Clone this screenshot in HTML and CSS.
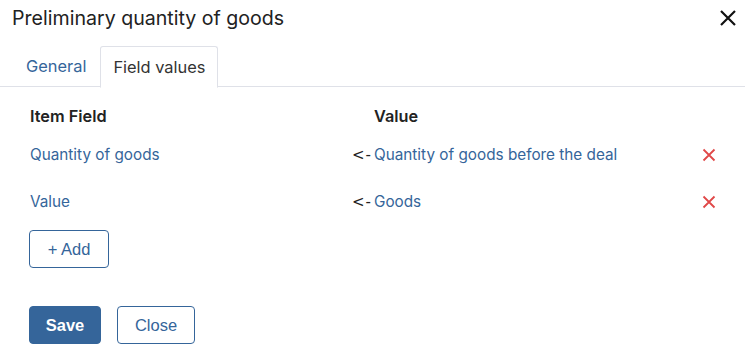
FILE: index.html
```html
<!DOCTYPE html>
<html>
<head>
    <meta charset="UTF-8">
    <title>Preliminary quantity of goods</title>
    <link rel="stylesheet" href="styles.css">
</head>
<body>
<div class="dialog">
    <div class="head">
        <div class="title">Preliminary quantity of goods</div>
        <div class="close">
            <svg width="18" height="18" viewBox="0 0 18 18"><path d="M2 2L16 16M16 2L2 16" stroke="#111" stroke-width="2.2" fill="none"/></svg>
        </div>
    </div>
    <ul class="tabs">
        <li>General</li>
        <li class="active">Field values</li>
    </ul>
    <div class="content">
        <div class="grid">
            <div class="th">Item Field</div>
            <div></div>
            <div class="th">Value</div>
            <div></div>

            <div class="link">Quantity of goods</div>
            <div class="arrow">&lt;-</div>
            <div class="link">Quantity of goods before the deal</div>
            <div class="del"><svg width="14" height="14" viewBox="0 0 14 14"><path d="M1.5 1.5L12.5 12.5M12.5 1.5L1.5 12.5" stroke="#e04848" stroke-width="1.8" fill="none"/></svg></div>

            <div class="link">Value</div>
            <div class="arrow">&lt;-</div>
            <div class="link">Goods</div>
            <div class="del"><svg width="14" height="14" viewBox="0 0 14 14"><path d="M1.5 1.5L12.5 12.5M12.5 1.5L1.5 12.5" stroke="#e04848" stroke-width="1.8" fill="none"/></svg></div>
        </div>
        <button class="btn add">+ Add</button>
        <div class="footer">
            <button class="btn primary">Save</button>
            <button class="btn">Close</button>
        </div>
    </div>
</div>
</body>
</html>
```

FILE: styles.css
```css
body,ul,li{
    margin: 0;
    padding: 0;
    list-style: none;
}
body{
    background: #fff;
    font-family: Inter, "Noto Sans", sans-serif;
    font-feature-settings: "calt" 0, "liga" 0;
    color: #222;
}
.dialog{
    width: 745px;height: 350px;
}
.head{
    display: flex;
    justify-content: space-between;
    align-items: center;
    height: 36px;
    padding: 0 8px 0 12px;
}
.title{
    font-size: 19.6px;
    color: #222;
}
.close{
    display: flex;
    width: 18px;height: 18px;
}
.tabs{
    display: flex;
    margin-top: 10px;
    padding-left: 12px;
    border-bottom: 1px solid #dfe1e8;
    height: 40px;
}
.tabs li{
    padding: 0 14px;
    line-height: 40px;
    font-size: 16.4px;
    color: #35659a;
    cursor: pointer;
}
.tabs li.active{
    padding: 0 12px;
    color: #333;
    border: 1px solid #dfe1e8;
    border-bottom: 1px solid #fff;
    border-radius: 3px 3px 0 0;
    background: #fff;
    height: 40px;
}
.content{
    padding: 0 29px;
}
.grid{
    display: grid;
    grid-template-columns: 322px 22px 1fr 14px;
    grid-template-rows: 44px 47px 47px;
    align-items: center;
    padding-left: 1px;
}
.th{
    font-size: 16.3px;
    font-weight: 600;
    color: #222;
    align-self: end;
    padding-bottom: 5px;
}
.link{
    font-size: 15.3px;
    color: #35659a;
    cursor: pointer;
}
.arrow{
    font-family: "DejaVu Sans", sans-serif;
    font-size: 15px;
    letter-spacing: 1px;
    color: #222;
    text-align: right;
    padding-right: 2px;
}
.del{
    display: flex;
    cursor: pointer;
}
.btn{
    font-family: "Liberation Sans", Arial, sans-serif;
    font-size: 16.5px;
    height: 38px;
    padding: 0;
    border: 1px solid #35659a;
    border-radius: 4px;
    background: #fff;
    color: #35659a;
    cursor: pointer;
}
.add{
    width: 80px;
    margin-top: 5px;
}
.footer{
    display: flex;
    gap: 16px;
    margin-top: 38px;
}
.primary{
    background: #35659a;
    color: #fff;
    font-weight: bold;
    width: 72px;
}
.footer .btn:nth-child(2){
    width: 78px;
}
```
